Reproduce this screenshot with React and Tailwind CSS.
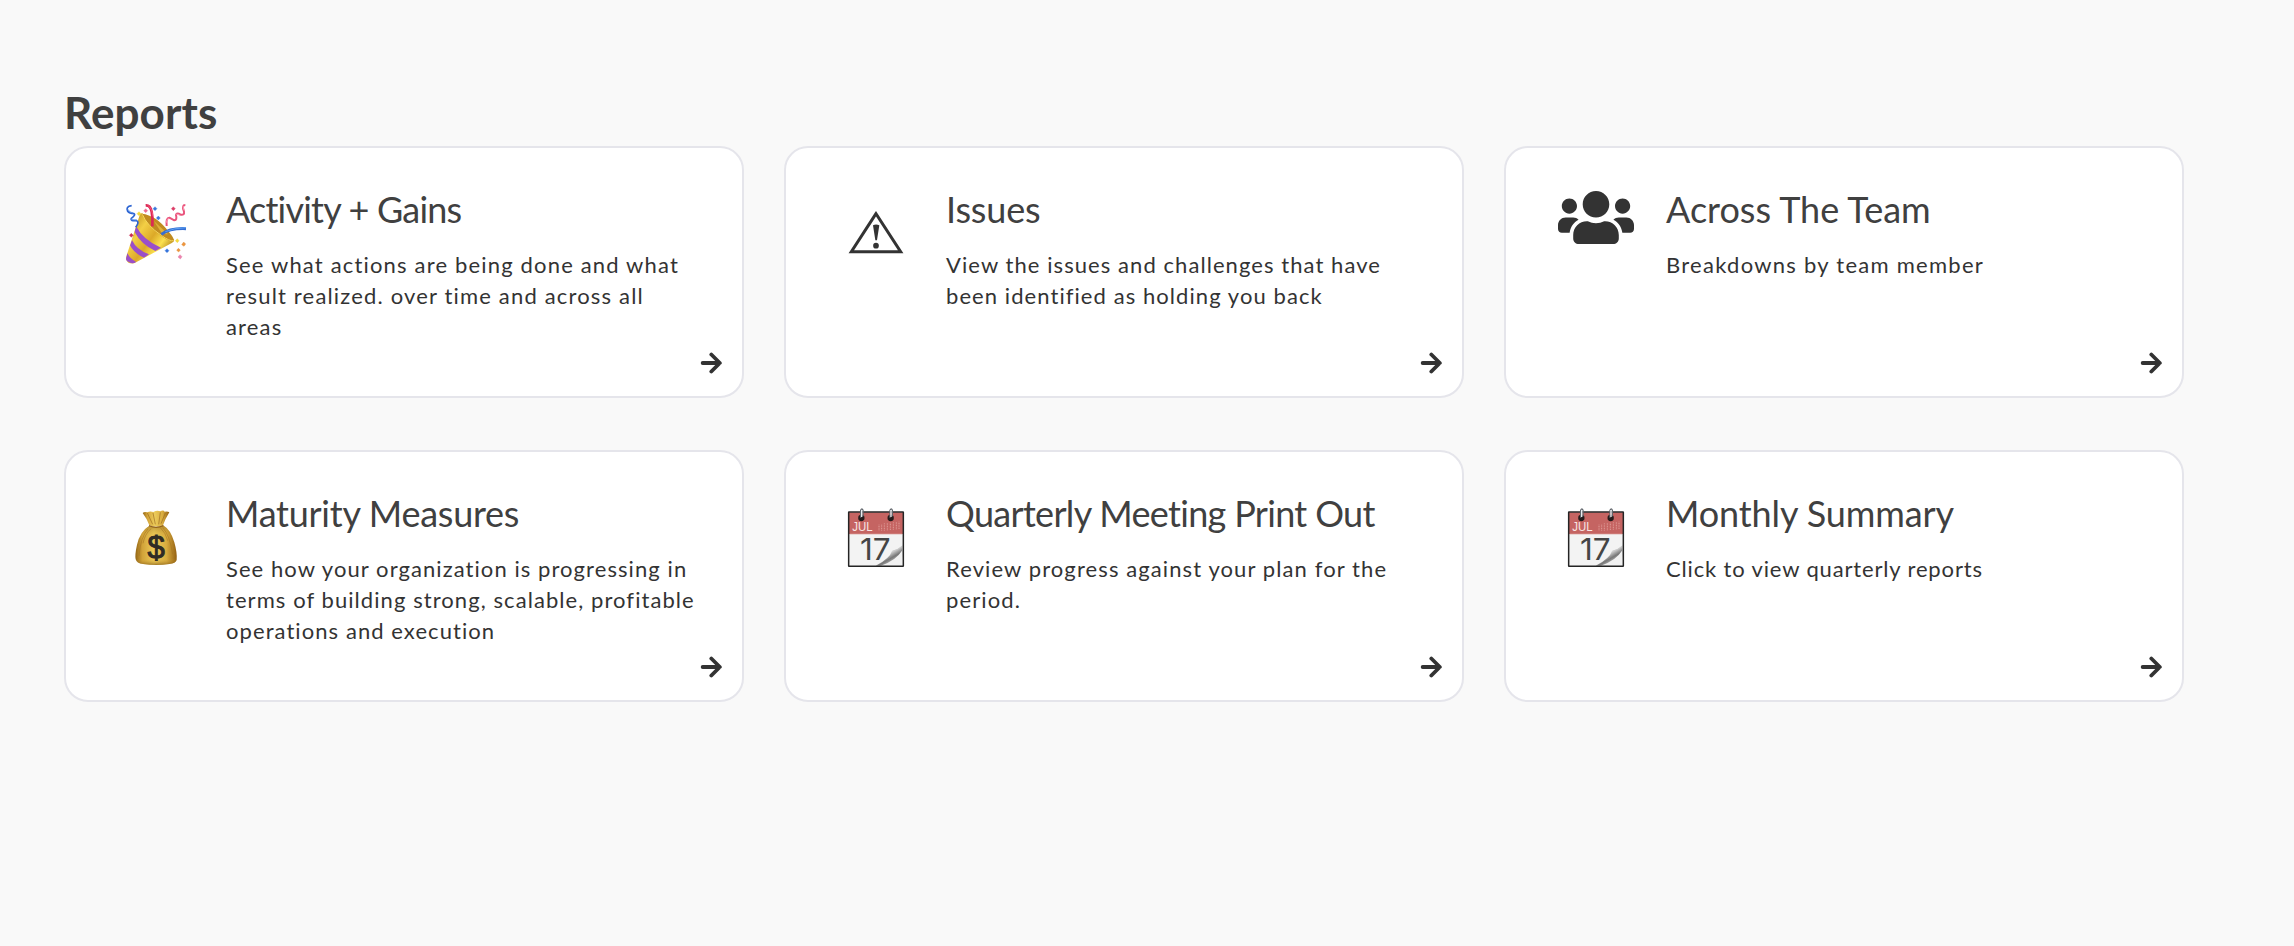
import React from "react";
import { FaUsers } from "react-icons/fa";

const PartyIcon = () => (
  <svg width="90" height="85" viewBox="0 0 270 255" className="ml-11 mt-[42px]">
    <defs>
      <linearGradient id="cone" x1="0" y1="0.3" x2="0.8" y2="0.9">
        <stop offset="0" stopColor="#b98a1c" />
        <stop offset="0.3" stopColor="#f3cf45" />
        <stop offset="0.55" stopColor="#dca928" />
        <stop offset="0.75" stopColor="#fbe14f" />
        <stop offset="1" stopColor="#a8740f" />
      </linearGradient>
      <clipPath id="coneClip">
        <path d="M97 70 L193 150 Q192 156 184 160 L74 219 Q56 225 49 210 Q47 203 50 196 L89 76 Q91 69 97 70 Z" />
      </clipPath>
    </defs>
    {/* Cone */}
    <g clipPath="url(#coneClip)">
      <rect x="40" y="60" width="160" height="165" fill="url(#cone)" />
      <path d="M78 108 Q99 150 153 173 L136 183 Q93 163 74 126 Z" fill="#9a4fc9" />
      <path d="M66 150 Q79 179 117 193 L102 203 Q71 189 60 166 Z" fill="#9a4fc9" />
      <path d="M52 189 Q59 206 79 216 L68 221 L46 211 Z" fill="#9a4fc9" />
    </g>
    <path d="M95 71 Q139 75 176 125 Q193 144 192 153 Q181 158 153 137 Q113 108 95 71 Z" fill="#c08b20" />
    <path d="M97 73 Q111 107 154 136 Q180 155 191 152" fill="none" stroke="#f5d65b" strokeWidth="3" />
    <path d="M131 92 L174 133 L157 132 Z" fill="#dfb13a" />
    {/* Streamers */}
    <path d="M107 46 Q121 45 125 65 Q129 83 127 109" fill="none" stroke="#dc2955" strokeWidth="8" />
    <path d="M113 46 Q126 53 129 79" fill="none" stroke="#ff6988" strokeWidth="2" />
    <path d="M154 133 Q179 114 228 116" fill="none" stroke="#356ed3" strokeWidth="9" />
    <path d="M166 125 Q191 114 228 113" fill="none" stroke="#5ca2f2" strokeWidth="3" />
    <path d="M65 47 Q46 49 53 64 Q58 71 72 71 Q78 74 64 85 Q60 94 80 92 Q89 96 77 112" fill="none" stroke="#2c64d2" strokeWidth="5" />
    <path d="M54 58 Q57 67 69 69 M63 87 Q65 90 80 90" fill="none" stroke="#5792ee" strokeWidth="3" />
    <path d="M170 108 Q167 83 178 83 Q187 88 193 91 Q202 90 198 75 Q200 67 212 74 Q224 76 222 65 Q214 45 226 45" fill="none" stroke="#e9547c" strokeWidth="6" />
    <path d="M170 98 Q170 84 178 86 M199 73 Q203 72 210 76 M222 61 L219 48" fill="none" stroke="#ff9cb5" strokeWidth="3" />
    {/* Confetti */}
    <g strokeWidth="1">
      <path d="M87 65l6 6-6 6-6-6z" fill="#f5dc35" stroke="#e3c536" />
      <path d="M107 56l6 6-6 6-6-6z" fill="#ed6e91" stroke="#ed6e91" />
      <path d="M135 50l6 6-6 6-6-6z" fill="#3977dc" stroke="#3977dc" />
      <path d="M145 78l6 6-6 6-6-6z" fill="#3977dc" stroke="#3977dc" />
      <path d="M190 50l6 6-6 6-6-6z" fill="#dc3e68" stroke="#dc3e68" />
      <path d="M64 130l6 6-6 6-6-6z" fill="#ca2c54" stroke="#ca2c54" />
      <path d="M202 146l5 6-5 6-6-6z" fill="#f6dc3b" stroke="#e3c536" />
      <path d="M221 156l6 6-5 7-7-5z" fill="#ee963d" stroke="#d9822e" />
      <path d="M205 175l6 5-5 6-6-5z" fill="#ee963d" stroke="#d9822e" />
      <path d="M171 176l6 6-6 6-6-6z" fill="#3373dc" stroke="#3373dc" />
      <path d="M210 194l6 6-5 7-7-6z" fill="#ed83ae" stroke="#d96996" />
    </g>
  </svg>
);

const WarningIcon = () => (
  <svg width="90" height="85" viewBox="0 0 270 255" className="ml-11 mt-[42px]">
    <path d="M138 71 L64 185 H212 Z" fill="none" stroke="#333" strokeWidth="9" />
    <path d="M129 106 Q138 101 148 106 L141 151 H136 Z" fill="#333" />
    <circle cx="138" cy="167" r="8.5" fill="#333" />
  </svg>
);

const TeamIcon = () => <FaUsers className="ml-[52px] mt-[39px] h-[61px] w-[76px]" />;

const MoneyBagIcon = () => (
  <svg width="90" height="85" viewBox="0 0 270 255" className="ml-11 mt-[43px]">
    <defs>
      <linearGradient id="bag" x1="0" y1="0" x2="1" y2="0">
        <stop offset="0" stopColor="#936514" />
        <stop offset="0.17" stopColor="#d2a339" />
        <stop offset="0.45" stopColor="#eccb5a" />
        <stop offset="0.75" stopColor="#d8ac3f" />
        <stop offset="1" stopColor="#946011" />
      </linearGradient>
      <linearGradient id="bagShade" x1="0" y1="0" x2="0" y2="1">
        <stop offset="0" stopColor="#734b0c" stopOpacity="0.45" />
        <stop offset="0.3" stopColor="#d5a735" stopOpacity="0" />
        <stop offset="0.85" stopColor="#d5a735" stopOpacity="0" />
        <stop offset="1" stopColor="#70480b" stopOpacity="0.6" />
      </linearGradient>
    </defs>
    <path d="M98 54 Q103 49 112 52 Q120 48 130 51 Q141 45 151 49 Q160 43 164 50 Q173 48 178 52 Q166 71 159 91 Q137 98 118 91 Q111 71 98 54 Z" fill="url(#bag)" />
    <path d="M112 54 L128 88 M129 54 L136 88 M151 52 L146 88 M166 54 L153 86" stroke="#9c6b20" strokeWidth="3" opacity="0.65" />
    <path d="M118 92 Q139 101 159 91 Q182 104 193 142 Q202 174 200 195 Q197 205 178 207 Q139 213 99 207 Q80 205 77 193 Q74 181 81 149 Q90 109 118 92 Z" fill="url(#bag)" />
    <path d="M118 92 Q139 101 159 91 Q182 104 193 142 Q202 174 200 195 Q197 205 178 207 Q139 213 99 207 Q80 205 77 193 Q74 181 81 149 Q90 109 118 92 Z" fill="url(#bagShade)" />
    <path d="M114 102 Q92 125 87 183 M123 101 Q104 118 99 145 M158 98 Q179 119 188 178 M151 98 Q167 113 173 137" fill="none" stroke="#a47320" strokeWidth="3" opacity="0.55" />
    <path d="M117 90 Q138 100 160 90 L160 94 Q138 104 117 94 Z" fill="#93621b" />
    <text x="138" y="188" textAnchor="middle" fontSize="93" stroke="#2f2b24" strokeWidth="3" fill="#2f2b24" className="font-['Liberation_Sans',sans-serif]">
      $
    </text>
  </svg>
);

const CalendarIcon = () => (
  <svg width="90" height="85" viewBox="0 0 270 255" className="ml-11 mt-[43px]">
    <defs>
      <linearGradient id="curl" x1="0.2" y1="0.1" x2="0.8" y2="0.9">
        <stop offset="0" stopColor="#fff" />
        <stop offset="0.4" stopColor="#d9d9d9" />
        <stop offset="0.65" stopColor="#777" />
        <stop offset="1" stopColor="#eee" />
      </linearGradient>
    </defs>
    <rect x="56" y="51" width="164" height="163" rx="1" fill="#f3f3f3" />
    <rect x="57" y="52" width="162" height="65" fill="#c56462" />
    <path d="M59 117 H217" stroke="#d99b98" strokeWidth="2" />
    <text x="67" y="107" fontSize="37" textLength="61" lengthAdjust="spacingAndGlyphs" fill="#f9e6e3" className="font-['Liberation_Sans',sans-serif]">
      JUL
    </text>
    <path d="M147 106v-17 M155 107v-20 M163 107v-22 M172 106v-22 M181 105v-22 M190 104v-22 M199 103v-22 M207 102v-22" stroke="#df9b97" strokeWidth="3" strokeDasharray="3 2" />
    <text x="90" y="194" fontSize="90" textLength="92" lengthAdjust="spacingAndGlyphs" fill="#454545" className="font-[Inter,sans-serif]">
      17
    </text>
    <path d="M217 151 Q202 165 186 167 Q180 190 137 212 H217 Z" fill="url(#curl)" />
    <path d="M217 166 Q198 197 153 212 H217 Z" fill="#f1f1f1" />
    <path d="M217 153 Q204 166 188 168" fill="none" stroke="#c9c9c9" strokeWidth="2" />
    <rect x="56" y="51" width="164" height="163" rx="1" fill="none" stroke="#242424" strokeWidth="4.5" />
    {/* Binder rings */}
    <circle cx="94" cy="69" r="9.5" fill="#251b1b" />
    <circle cx="182" cy="69" r="9.5" fill="#251b1b" />
    <path d="M92 68 V46 Q96 37 99 46 V64 M180 68 V46 Q184 37 187 46 V64" fill="none" stroke="#61666c" strokeWidth="4" />
    <path d="M95 66 V45 M183 66 V45" stroke="#e7edf1" strokeWidth="4" />
  </svg>
);

const ArrowIcon = () => (
  <svg width="22" height="22" viewBox="0 0 66 66" fill="none" stroke="currentColor" strokeWidth="11.5" strokeLinecap="round" strokeLinejoin="round" className="mb-[22px] shrink-0 self-end">
    <path d="M8 33 H59 M34 7.5 L59.5 33 L34 58.5" />
  </svg>
);

const reports = [
  {
    title: "Activity + Gains",
    titleClass: "tracking-[-0.8px]",
    lines: ["See what actions are being done and what", "result realized. over time and across all", "areas"],
    textClass: "tracking-[1.17px]",
    Icon: PartyIcon,
  },
  {
    title: "Issues",
    titleClass: "tracking-[-0.15px]",
    lines: ["View the issues and challenges that have", "been identified as holding you back"],
    textClass: "tracking-[1.07px]",
    Icon: WarningIcon,
  },
  {
    title: "Across The Team",
    titleClass: "tracking-normal",
    lines: ["Breakdowns by team member"],
    textClass: "tracking-[1.27px]",
    Icon: TeamIcon,
  },
  {
    title: "Maturity Measures",
    titleClass: "tracking-[-0.25px]",
    lines: ["See how your organization is progressing in", "terms of building strong, scalable, profitable", "operations and execution"],
    textClass: "tracking-[1.07px]",
    Icon: MoneyBagIcon,
  },
  {
    title: "Quarterly Meeting Print Out",
    titleClass: "tracking-[-0.67px]",
    lines: ["Review progress against your plan for the", "period."],
    textClass: "tracking-[1.1px]",
    Icon: CalendarIcon,
  },
  {
    title: "Monthly Summary",
    titleClass: "tracking-[-0.1px]",
    lines: ["Click to view quarterly reports"],
    textClass: "tracking-[0.85px]",
    Icon: CalendarIcon,
  },
];

const ReportCard = ({ title, titleClass, lines, textClass, Icon }) => (
  <div className="flex h-[252px] cursor-pointer rounded-3xl border-2 border-[#e5e5eb] bg-white text-[#333]">
    <div className="w-40 shrink-0">
      <Icon />
    </div>
    <div className="w-[474px] shrink-0 whitespace-nowrap pt-[37px]">
      <h2 className={`text-[36px] leading-[48px] text-[#404040] ${titleClass}`}>{title}</h2>
      <p className={`mt-4 text-[22px] leading-[31px] ${textClass}`}>
        {lines.map((line) => (
          <span key={line} className="block">
            {line}
          </span>
        ))}
      </p>
    </div>
    <ArrowIcon />
  </div>
);

const App = () => {
  return (
    <div className="min-h-screen bg-[#f9f9f9] pl-16 pt-[82px] font-[Lato,sans-serif]">
      <h1 className="mb-1 text-[44px] font-bold leading-[60px] tracking-[0.1px] text-[#404040]">Reports</h1>
      <div className="grid w-[2120px] grid-cols-3 gap-x-10 gap-y-[52px]">
        {reports.map((report) => (
          <ReportCard key={report.title} {...report} />
        ))}
      </div>
    </div>
  );
};

export default App;
